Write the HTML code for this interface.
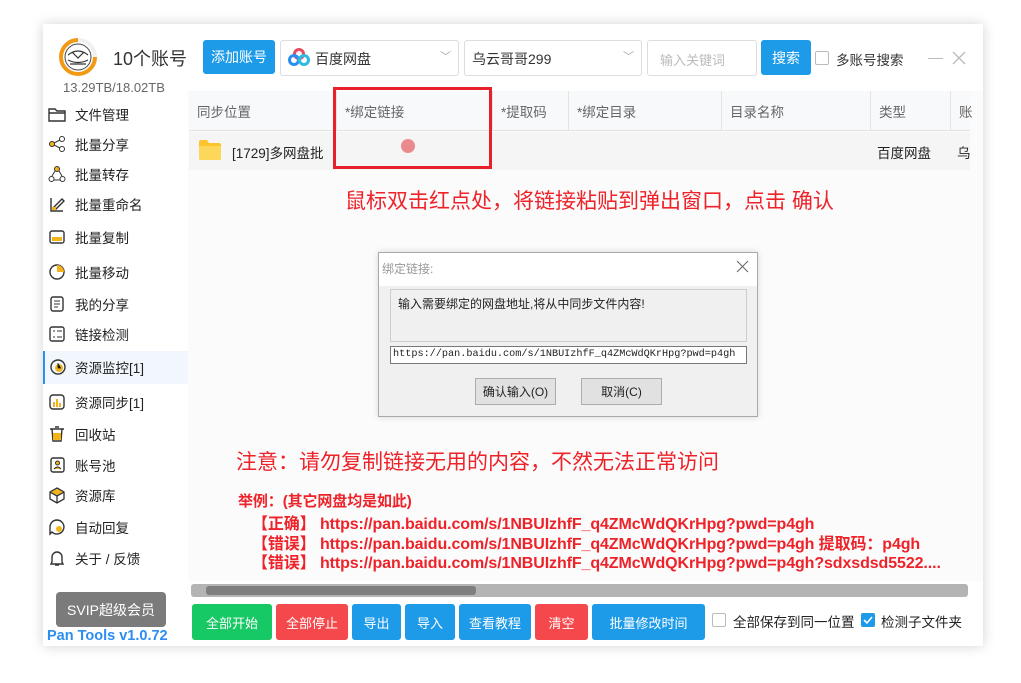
<!DOCTYPE html>
<html><head><meta charset="utf-8"><style>
*{box-sizing:border-box;margin:0;padding:0}
body{width:1021px;height:683px;background:#fff;font-family:"Liberation Sans","Noto Sans CJK SC",sans-serif;position:relative;overflow:hidden;color:#222}
.a{position:absolute}
.win{left:43px;top:24px;width:940px;height:622px;background:#fff;box-shadow:0 0 12px rgba(0,0,0,.18)}
.btn{position:absolute;color:#fff;font-size:13px;display:flex;align-items:center;justify-content:center;border-radius:3px}
.blue{background:#1e9be8}.red{background:#f5484c}.green{background:#17c964}
.si{position:absolute;left:0;width:145px;height:30px;display:flex;align-items:center;font-size:13.5px;color:#222}
.si svg{margin-left:5px;margin-right:9px}
.th{position:absolute;top:0;height:40px;display:flex;align-items:center;font-size:13.5px;color:#666;padding-left:8px;border-left:1px solid #e4e4e4}
.cb{position:absolute;width:14px;height:14px;border:1px solid #bbb;border-radius:2px;background:#fff}
.rt{color:#ee2229;font-weight:bold;font-size:16px;position:absolute;white-space:nowrap;letter-spacing:-0.1px}
</style></head><body>
<div class="a win"></div>
<svg class="a" style="left:58px;top:37px" width="40" height="40" viewBox="0 0 40 40"><circle cx="20" cy="20" r="17" fill="none" stroke="#f0f0f0" stroke-width="4"/><path d="M20 3 A17 17 0 1 0 37 20" fill="none" stroke="#f39a14" stroke-width="4"/><circle cx="20" cy="20" r="13" fill="#fff" stroke="#444" stroke-width="1"/><path d="M10 18 Q20 10 30 18 M10 23 Q20 28 30 23 M12 27 H28 M14 15 L20 21 L26 15" stroke="#333" fill="none" stroke-width="1.2"/></svg>
<div class="a" style="left:113px;top:45px;font-size:18px;color:#333">10个账号</div>
<div class="a" style="left:63px;top:80px;font-size:13px;color:#666">13.29TB/18.02TB</div>
<div class="btn blue" style="left:203px;top:40px;width:72px;height:34px;font-size:14px">添加账号</div>
<div class="a" style="left:280px;top:40px;width:179px;height:36px;border:1px solid #ddd;border-radius:3px"></div>
<svg class="a" style="left:287px;top:46px" width="24" height="24" viewBox="0 0 24 24"><circle cx="12" cy="8" r="4.5" fill="none" stroke="#e84a5f" stroke-width="3"/><circle cx="7" cy="14" r="4.5" fill="none" stroke="#2c8ef0" stroke-width="3"/><circle cx="17" cy="14" r="4.5" fill="none" stroke="#2fbadf" stroke-width="3"/></svg>
<div class="a" style="left:315px;top:49px;font-size:14px;color:#333">百度网盘</div>
<div class="a" style="left:440px;top:48px;font-size:11px;color:#aaa">﹀</div>
<div class="a" style="left:464px;top:40px;width:178px;height:36px;border:1px solid #ddd;border-radius:3px"></div>
<div class="a" style="left:472px;top:49px;font-size:14px;color:#333">乌云哥哥299</div>
<div class="a" style="left:623px;top:48px;font-size:11px;color:#aaa">﹀</div>
<div class="a" style="left:647px;top:40px;width:110px;height:36px;border:1px solid #ddd;border-radius:3px"></div>
<div class="a" style="left:660px;top:50px;font-size:13px;color:#bbb">输入关键词</div>
<div class="btn blue" style="left:761px;top:40px;width:50px;height:35px;font-size:14px">搜索</div>
<div class="cb" style="left:815px;top:51px"></div>
<div class="a" style="left:836px;top:49px;font-size:13.5px;color:#333">多账号搜索</div>
<div class="a" style="left:928px;top:58px;width:15px;height:1px;background:#bbb"></div>
<svg class="a" style="left:952px;top:51px" width="14" height="14"><path d="M1 1L13 13M13 1L1 13" stroke="#bbb" stroke-width="1.3"/></svg>
<div class="a" style="left:43px;top:351px;width:145px;height:33px;background:#f2f7fd;border-left:2px solid #2c8ef0"></div>
<div class="a" style="left:43px;top:0">
<div class="si" style="top:99px"><svg width="18" height="18"><path d="M1 4h6l2 2h8v10H1z M1 8h16" fill="none" stroke="#333" stroke-width="1.4"/></svg>文件管理</div>
<div class="si" style="top:129px"><svg width="18" height="18"><circle cx="4" cy="9" r="2.5" fill="#f3b41b" stroke="#333"/><circle cx="14" cy="4" r="2.5" fill="none" stroke="#333"/><circle cx="14" cy="14" r="2.5" fill="none" stroke="#333"/><path d="M6 8L12 5M6 10L12 13" stroke="#333"/></svg>批量分享</div>
<div class="si" style="top:159px"><svg width="18" height="18"><circle cx="9" cy="4" r="2.5" fill="#f3b41b" stroke="#333"/><circle cx="3.5" cy="14" r="2.5" fill="none" stroke="#333"/><circle cx="14.5" cy="14" r="2.5" fill="none" stroke="#333"/><path d="M7 6L4 11M11 6L14 11M6 15H12" stroke="#333"/></svg>批量转存</div>
<div class="si" style="top:189px"><svg width="18" height="18"><path d="M3 3v13h12M6 12l8-8 2 2-8 8H6z" fill="none" stroke="#333" stroke-width="1.4"/><rect x="4" y="12" width="4" height="3" fill="#f3b41b"/></svg>批量重命名</div>
<div class="si" style="top:222px"><svg width="18" height="18"><rect x="2" y="3" width="14" height="12" rx="2" fill="none" stroke="#333" stroke-width="1.4"/><rect x="4" y="9" width="10" height="4" fill="#f3b41b"/></svg>批量复制</div>
<div class="si" style="top:257px"><svg width="18" height="18"><circle cx="9" cy="9" r="7" fill="none" stroke="#333" stroke-width="1.4"/><path d="M9 9V2A7 7 0 0 1 16 9z" fill="#f3b41b"/></svg>批量移动</div>
<div class="si" style="top:289px"><svg width="18" height="18"><rect x="3" y="2" width="12" height="14" rx="2" fill="none" stroke="#333" stroke-width="1.4"/><path d="M6 6h6M6 9h6M6 12h4" stroke="#333"/></svg>我的分享</div>
<div class="si" style="top:319px"><svg width="18" height="18"><rect x="2" y="2" width="14" height="14" rx="2" fill="none" stroke="#333" stroke-width="1.4"/><path d="M5 6h2M9 6h5M5 12h2M9 12h5" stroke="#333"/></svg>链接检测</div>
<div class="si" style="top:352px"><svg width="18" height="18"><circle cx="10" cy="9" r="7" fill="none" stroke="#333" stroke-width="1.4"/><circle cx="11" cy="10" r="4" fill="#f3b41b"/><path d="M10 5v5h3" stroke="#333"/></svg>资源监控[1]</div>
<div class="si" style="top:387px"><svg width="18" height="18"><rect x="2" y="2" width="14" height="14" rx="3" fill="none" stroke="#333" stroke-width="1.4"/><path d="M6 14V9M9 14V6M12 14V10" stroke="#f3b41b" stroke-width="2"/></svg>资源同步[1]</div>
<div class="si" style="top:419px"><svg width="18" height="18"><path d="M2 4h14M4 4l1 12h8l1-12M7 2h4" fill="none" stroke="#333" stroke-width="1.4"/><rect x="5" y="8" width="8" height="7" fill="#f3b41b"/></svg>回收站</div>
<div class="si" style="top:450px"><svg width="18" height="18"><rect x="3" y="2" width="13" height="14" rx="2" fill="none" stroke="#333" stroke-width="1.4"/><circle cx="9.5" cy="7" r="2" fill="#f3b41b" stroke="#333"/><path d="M6 13q3.5-4 7 0" fill="#f3b41b" stroke="#333"/></svg>账号池</div>
<div class="si" style="top:480px"><svg width="18" height="18"><path d="M9 2l7 4v7l-7 4-7-4V6z M2 6l7 4 7-4M9 10v7" fill="none" stroke="#333" stroke-width="1.3"/><path d="M9 3l6 3-6 3-6-3z" fill="#f3b41b"/></svg>资源库</div>
<div class="si" style="top:512px"><svg width="18" height="18"><path d="M9 2a7 7 0 1 1-5 12l-2 2V9a7 7 0 0 1 7-7z" fill="none" stroke="#333" stroke-width="1.4"/><circle cx="11" cy="11" r="3" fill="#f3b41b"/></svg>自动回复</div>
<div class="si" style="top:543px"><svg width="18" height="18"><path d="M4 13V8a5 5 0 0 1 10 0v5l1 2H3zM7 16h4" fill="none" stroke="#333" stroke-width="1.4"/></svg>关于 / 反馈</div>
</div>
<div class="btn" style="left:56px;top:592px;width:110px;height:35px;background:#7b7b7b;font-size:14px;border-radius:4px">SVIP超级会员</div>
<div class="a" style="left:47px;top:628px;font-size:14.5px;font-weight:bold;color:#2c8ef0">Pan Tools v1.0.72</div>
<div class="a" style="left:188px;top:91px;width:795px;height:490px;background:#fbfbfb"></div>
<div class="a" style="left:189px;top:91px;width:781px;height:40px;background:#f8f9fb;border-bottom:1px solid #e2e2e2">
<div class="th" style="left:0;border:none">同步位置</div>
<div class="th" style="left:147px">*绑定链接</div>
<div class="th" style="left:303px">*提取码</div>
<div class="th" style="left:379px">*绑定目录</div>
<div class="th" style="left:532px">目录名称</div>
<div class="th" style="left:681px">类型</div>
<div class="th" style="left:761px">账</div>
</div>
<div class="a" style="left:189px;top:132px;width:781px;height:38px;background:#f5f5f5"></div>
<svg class="a" style="left:198px;top:139px" width="24" height="22"><path d="M1 3a2 2 0 0 1 2-2h6l2 3h10a2 2 0 0 1 2 2v13a2 2 0 0 1-2 2H3a2 2 0 0 1-2-2z" fill="#fcc52e"/><path d="M1 7h22v12a2 2 0 0 1-2 2H3a2 2 0 0 1-2-2z" fill="#fdd75a"/></svg>
<div class="a" style="left:232px;top:142px;font-size:13.5px;color:#222">[1729]多网盘批</div>
<div class="a" style="left:877px;top:142px;font-size:13.5px;color:#222">百度网盘</div>
<div class="a" style="left:957px;top:142px;font-size:13.5px;color:#222">乌</div>
<div class="a" style="left:333px;top:87px;width:159px;height:82px;border:3px solid #e8202a"></div>
<div class="a" style="left:401px;top:139px;width:14px;height:14px;border-radius:50%;background:#ea8a8c"></div>
<div class="a" style="left:345px;top:185px;font-size:21px;color:#ee2229">鼠标双击红点处，将链接粘贴到弹出窗口，点击 确认</div>
<div class="a" style="left:378px;top:252px;width:380px;height:165px;background:#f0f0f0;border:1px solid #aaa;box-shadow:0 0 6px rgba(0,0,0,.15)">
<div style="height:33px;background:#fff;font-size:12px;color:#999;padding:7px 0 0 3px">绑定链接:</div>
<svg class="a" style="left:357px;top:7px" width="13" height="13"><path d="M1 1L12 12M12 1L1 12" stroke="#666"/></svg>
<div class="a" style="left:11px;top:36px;width:357px;height:53px;border:1px solid #ccc;font-size:12px;color:#222;padding:5px 7px">输入需要绑定的网盘地址,将从中同步文件内容!</div>
<div class="a" style="left:11px;top:93px;width:357px;height:18px;border:1px solid #777;background:#fff;font-family:'Liberation Mono',monospace;font-size:10.2px;padding:2px 2px;white-space:nowrap;overflow:hidden">https://pan.baidu.com/s/1NBUIzhfF_q4ZMcWdQKrHpg?pwd=p4gh</div>
<div class="a" style="left:96px;top:125px;width:81px;height:27px;border:1px solid #adadad;background:#e1e1e1;font-size:12px;display:flex;align-items:center;justify-content:center">确认输入(O)</div>
<div class="a" style="left:202px;top:125px;width:81px;height:27px;border:1px solid #adadad;background:#e1e1e1;font-size:12px;display:flex;align-items:center;justify-content:center">取消(C)</div>
</div>
<div class="a" style="left:236px;top:446px;font-size:21px;color:#ee2229">注意：请勿复制链接无用的内容，不然无法正常访问</div>
<div class="rt" style="left:238px;top:490px;font-size:15px">举例：(其它网盘均是如此)</div>
<div class="rt" style="left:252px;top:510px">【正确】 https://pan.baidu.com/s/1NBUIzhfF_q4ZMcWdQKrHpg?pwd=p4gh</div>
<div class="rt" style="left:252px;top:530px">【错误】 https://pan.baidu.com/s/1NBUIzhfF_q4ZMcWdQKrHpg?pwd=p4gh 提取码：p4gh</div>
<div class="rt" style="left:252px;top:549px">【错误】 https://pan.baidu.com/s/1NBUIzhfF_q4ZMcWdQKrHpg?pwd=p4gh?sdxsdsd5522....</div>
<div class="a" style="left:191px;top:584px;width:777px;height:13px;background:#b4b4b4;border-radius:3px"></div>
<div class="a" style="left:206px;top:586px;width:270px;height:9px;background:#7f7f7f;border-radius:3px"></div>
<div class="btn green" style="left:192px;top:604px;width:80px;height:36px">全部开始</div>
<div class="btn red" style="left:276px;top:604px;width:72px;height:36px">全部停止</div>
<div class="btn blue" style="left:352px;top:604px;width:49px;height:36px">导出</div>
<div class="btn blue" style="left:405px;top:604px;width:50px;height:36px">导入</div>
<div class="btn blue" style="left:459px;top:604px;width:72px;height:36px">查看教程</div>
<div class="btn red" style="left:535px;top:604px;width:53px;height:36px">清空</div>
<div class="btn blue" style="left:592px;top:604px;width:113px;height:36px">批量修改时间</div>
<div class="cb" style="left:712px;top:613px"></div>
<div class="a" style="left:733px;top:611px;font-size:13.5px;color:#222">全部保存到同一位置</div>
<div class="a" style="left:861px;top:613px;width:14px;height:14px;background:#1e9be8;border-radius:2px"></div>
<svg class="a" style="left:861px;top:613px" width="14" height="14"><path d="M3 7l3 3 5-6" stroke="#fff" stroke-width="1.6" fill="none"/></svg>
<div class="a" style="left:881px;top:611px;font-size:13.5px;color:#222">检测子文件夹</div>
</body></html>
